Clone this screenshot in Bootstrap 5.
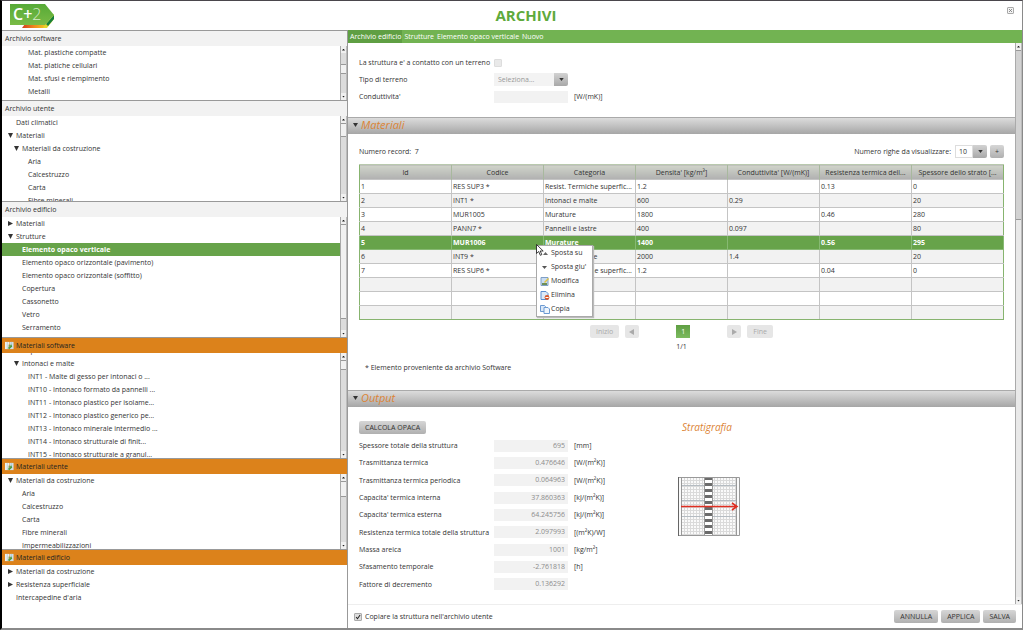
<!DOCTYPE html>
<html lang="it">
<head>
<meta charset="utf-8">
<meta name="viewport" content="width=device-width, initial-scale=1">
<title>Archivi</title>
<link href="https://cdn.jsdelivr.net/npm/bootstrap@5.3.0/dist/css/bootstrap.min.css" rel="stylesheet">
<style>
:root{--green:#67a34a;--bar:#72b352;--orange:#dc821b}
body{font:7px/13px "Open Sans","Noto Sans",sans-serif;color:#333;background:#fff}
.app{height:100vh;min-height:600px;border:solid #8a8a8a;border-width:1px 1px 2px 2px;border-top-color:#4a464c;border-left-color:#000}
.topbar{height:29px}
.topbar h1{font-size:15px;line-height:29px;font-weight:700;color:#5eaa3c}
.logo{left:8px;top:2px}
.closer{right:8px;top:6px;width:7px;height:7px;border:1px solid #aaa;border-radius:1px;background:#f4f4f4}
.closer svg,.btn-x svg,.arrow-box svg{display:block;margin:auto}
/* sidebar */
.side{width:346px;border-right:1px solid #999;display:grid;grid-template-rows:70fr 101fr 136fr 121fr 91fr 79fr}
.pane{border-top:1px solid #999;min-height:0}
.pane-head{height:15px;line-height:15px;background:#f2f2f2;padding-left:3px;font-size:7px;flex:none}
.pane-head svg{margin-right:2px}
.mat .pane-head{background:var(--orange);color:#222}
.tree a{display:block;color:#333;text-decoration:none;height:13px;line-height:13px;white-space:nowrap}
.tree .l1{padding-left:14px}.tree .l2{padding-left:20px}.tree .l3{padding-left:26px}
.tree .open::before,.tree .shut::before{content:"";display:inline-block;width:5px;height:5px;margin-left:-8px;margin-right:3px;background:#333;clip-path:polygon(0 0,100% 0,50% 100%)}
.tree .shut::before{clip-path:polygon(0 0,100% 50%,0 100%)}
.tree a.picked{background:var(--green);color:#fff;font-weight:700}
.scrolled{margin-top:-9px}
.sbar{width:7px;flex:none;background:#dcdcdc;border-left:1px solid #aaa;border-right:1px solid #bbb}
.sbar i{height:7px;flex:none;background:#f0f0f0;display:flex;align-items:center;justify-content:center}
.sbar i::before{content:"";width:3px;height:2px;background:#222;clip-path:polygon(50% 0,100% 100%,0 100%)}
.sbar i:last-child::before{clip-path:polygon(0 0,100% 0,50% 100%)}
.thumb{background:#f1f1f1;border:1px solid #999;border-width:1px 0;flex:none}
.sbar.main-bar{background:#e9e9e9}
.main-bar .thumb{background:#d2d2d2}
/* main */
.crumbs{height:13px;background:var(--bar);line-height:13px}
.crumbs a{color:#fff;text-decoration:none;padding:0 1px 0 2px}
.crumbs a.here{background:#5f9f43}
.frm{display:grid;grid-template-columns:135px 74px 1fr;grid-auto-rows:17px;align-items:center;column-gap:0}
.frm .unit{padding-left:6px}
.box{border:0;background:#f2f2f2;height:12px;width:100%;padding:0 3px;text-align:right;color:#8c8c8c;font-size:7px;line-height:12px;display:block}
.sel{display:flex;height:13px}
.sel select{appearance:none;flex:1;min-width:0;border:0;background:#f3f3f3;color:#999;padding:0 4px;font-size:7px;line-height:13px}
.sel .rows-num{background:#fff;color:#333;border:1px solid #ddd;padding:0 3px;line-height:11px}
.arrow-box{width:14px;display:flex;align-items:center;background:linear-gradient(#d2d2d2,#a8a8a8);border-radius:0 2px 2px 0;pointer-events:none}
.sect{height:17px;background:linear-gradient(#dcdcdc,#a6a6a6);border-top:1px solid #aaa}
.sect h2,.strat h2{font-size:11px;line-height:13px;font-weight:400;font-style:italic;margin:0;color:#dc8436}
.sect::before{content:"";width:5px;height:4px;background:#333;clip-path:polygon(0 0,100% 0,50% 100%);margin:5px 3px 0 5px}
.pad{padding-left:11px;padding-right:11px}
.btn-x{border:0;border-radius:2px;background:linear-gradient(#d6d6d6,#b0b0b0);color:#333;font-size:7px;line-height:13px;height:13px;padding:0 6px}
.btn-x:disabled{background:#e6e6e6;color:#aaa}
.btn-x.sq{width:14px;padding:0}
.btn-x.now{background:linear-gradient(#5f9f43,#7cba5f);color:#fff;border-radius:0}
.pager{gap:6px;margin-top:5px}
.grid7{table-layout:fixed;width:100%;border-collapse:collapse;border:1px solid #87b46f}
.grid7 th{height:15px;padding:0 2px;line-height:13px;font-weight:400;text-align:center;background:linear-gradient(#d0d4ca,#b0b0b0);border-left:1px solid #a8b89e;border-top:1px solid #b9c9ae}
.grid7 td{height:14px;line-height:12px;padding:0 1px;border:1px solid #c4c4c4}
.grid7 th,.grid7 .cut{overflow:hidden;white-space:nowrap;text-overflow:ellipsis}
.grid7 tbody tr:nth-child(even) td{background:#f2f2f2}
.grid7 tbody tr.picked td{background:var(--green);color:#fff;font-weight:700;border-color:#87b973}
.grid7 tr>:first-child{border-left-color:#87b46f}
.grid7 tr>:last-child{border-right-color:#87b46f}
.grid7 tbody tr:last-child td{border-bottom-color:#87b46f}
.ctx{left:-8px;top:9px;width:57px;background:#fff;border:1px solid #aaa;box-shadow:1px 1px 1px #bbb;z-index:3}
.ctx button{display:flex;align-items:center;gap:1px;height:14px;line-height:14px;width:100%;border:0;background:none;color:#333;font-size:7px;padding:0 3px;white-space:nowrap}
.pointer{left:-8px;top:8px;z-index:4}
.left{width:297px;flex:none}
.fields{grid-auto-rows:1fr}
.strat{width:106px;text-align:center}
.strat h2{font-size:10px;padding-right:4px}
.strat svg{margin-top:43px}
.foot{height:24px;border-top:1px solid #eee;padding:0 6px}
.foot input,.tick{appearance:none;width:8px;height:8px;margin:0;background:#e9e9e9;border:1px solid #ddd;border-radius:1px}
.foot input{border-color:#aaa}
.foot label{margin-left:3px}
.foot .btn-x+.btn-x{margin-left:3px}
.foot input:checked{background:#ddd url("data:image/svg+xml,%3Csvg xmlns='http://www.w3.org/2000/svg' viewBox='0 0 8 8'%3E%3Cpath d='M1.5 4 3.3 6.3 6.8 1.4' fill='none' stroke='%23222' stroke-width='1.4'/%3E%3C/svg%3E") center/100% no-repeat}
</style>
</head>
<body>
<svg class="d-none">
  <symbol id="leaf" viewBox="0 0 10 10"><path d="M0 1h5v8H0z" fill="#eef3ee"/><path d="M5.500 1H9.500v8h-4z" fill="#cfe0ea"/><path d="M2.500 1v8M7 1v3" stroke="#a9bccb" stroke-width=".7"/><path d="M3 8 7 3.500 8 6 5 9z" fill="#3f9a3c"/><path d="M4 4h2v3H4z" fill="#8a9a45"/></symbol>
  <symbol id="dn" viewBox="0 0 6 4"><path d="M0 0h6L3 4z" fill="#333"/></symbol>
</svg>
<div class="app d-flex flex-column overflow-hidden">
  <header class="topbar position-relative text-center flex-shrink-0">
    <svg class="logo position-absolute" width="46" height="26" viewBox="0 0 46 26" role="img" aria-label="C+2">
      <defs><linearGradient id="lg" x2="0" y2="1"><stop stop-color="#57aa37"/><stop offset="1" stop-color="#79bb45"/></linearGradient><linearGradient id="rg"><stop stop-color="#d63b1e"/><stop offset=".5" stop-color="#ef8b1d"/><stop offset="1" stop-color="#f1d024"/></linearGradient></defs>
      <path d="M12 25l3-4h22l-3 4z" fill="url(#rg)"/><path d="M33 25 44 11v5l-7 9z" fill="#e3d62c"/><path d="M36 21l8-9v4l-6 7z" fill="#17803a"/>
      <path d="M0 1h35l9 11-9 10H0z" fill="url(#lg)"/>
      <text x="3" y="17" font-size="16" font-weight="600" fill="#fff">C+<tspan font-weight="300" fill="#d6ebc9">2</tspan></text>
    </svg>
    <h1 class="m-0 ps-1 ms-4">ARCHIVI</h1>
    <button class="closer position-absolute p-0" aria-label="Chiudi"><svg width="5" height="5" viewBox="0 0 5 5"><path d="M1 1l3 3M4 1 1 4" stroke="#777" stroke-width=".8"/></svg></button>
  </header>
  <div class="d-flex flex-grow-1 overflow-hidden">
    <aside class="side flex-shrink-0">
      <section class="pane d-flex flex-column overflow-hidden">
        <div class="pane-head">Archivio software</div>
        <div class="d-flex flex-grow-1 overflow-hidden">
          <nav class="tree flex-grow-1 overflow-hidden"><a href="#" class="l3">Mat. plastiche compatte</a><a href="#" class="l3">Mat. platiche cellulari</a><a href="#" class="l3">Mat. sfusi e riempimento</a><a href="#" class="l3">Metalli</a></nav>
          <div class="sbar d-flex flex-column"><i></i><div class="flex-grow-1 d-flex flex-column"><div style="flex:3"></div><div class="thumb" style="height:24%"></div><div style="flex:5"></div></div><i></i></div>
        </div>
      </section>
      <section class="pane d-flex flex-column overflow-hidden">
        <div class="pane-head">Archivio utente</div>
        <div class="d-flex flex-grow-1 overflow-hidden">
          <nav class="tree flex-grow-1 overflow-hidden"><a href="#" class="l1">Dati climatici</a><a href="#" class="l1 open">Materiali</a><a href="#" class="l2 open">Materiali da costruzione</a><a href="#" class="l3">Aria</a><a href="#" class="l3">Calcestruzzo</a><a href="#" class="l3">Carta</a><a href="#" class="l3">Fibre minerali</a></nav>
          <div class="sbar d-flex flex-column"><i></i><div class="flex-grow-1"><div class="thumb" style="height:20%"></div></div><i></i></div>
        </div>
      </section>
      <section class="pane d-flex flex-column overflow-hidden">
        <div class="pane-head">Archivio edificio</div>
        <div class="d-flex flex-grow-1 overflow-hidden">
          <nav class="tree flex-grow-1 overflow-hidden"><a href="#" class="l1 shut">Materiali</a><a href="#" class="l1 open">Strutture</a><a href="#" class="l2 picked">Elemento opaco verticale</a><a href="#" class="l2">Elemento opaco orizzontale (pavimento)</a><a href="#" class="l2">Elemento opaco orizzontale (soffitto)</a><a href="#" class="l2">Copertura</a><a href="#" class="l2">Cassonetto</a><a href="#" class="l2">Vetro</a><a href="#" class="l2">Serramento</a></nav>
          <div class="sbar d-flex flex-column"><i></i><div class="flex-grow-1"><div class="thumb" style="height:90%"></div></div><i></i></div>
        </div>
      </section>
      <section class="pane mat d-flex flex-column overflow-hidden">
        <div class="pane-head d-flex align-items-center"><svg width="9" height="9"><use href="#leaf"/></svg>Materiali software</div>
        <div class="d-flex flex-grow-1 overflow-hidden">
          <nav class="tree flex-grow-1 overflow-hidden"><div class="scrolled"><a href="#" class="l2">Impermeabilizzazioni</a><a href="#" class="l2 open">Intonaci e malte</a><a href="#" class="l3">INT1 - Malte di gesso per intonaci o ...</a><a href="#" class="l3">INT10 - Intonaco formato da pannelli ...</a><a href="#" class="l3">INT11 - Intonaco plastico per isolame...</a><a href="#" class="l3">INT12 - Intonaco plastico generico pe...</a><a href="#" class="l3">INT13 - Intonaco minerale intermedio ...</a><a href="#" class="l3">INT14 - Intonaco strutturale di finit...</a><a href="#" class="l3">INT15 - Intonaco strutturale a granul...</a></div></nav>
          <div class="sbar d-flex flex-column"><i></i><div class="flex-grow-1"><div class="thumb" style="height:11%"></div></div><i></i></div>
        </div>
      </section>
      <section class="pane mat d-flex flex-column overflow-hidden">
        <div class="pane-head d-flex align-items-center"><svg width="9" height="9"><use href="#leaf"/></svg>Materiali utente</div>
        <div class="d-flex flex-grow-1 overflow-hidden">
          <nav class="tree flex-grow-1 overflow-hidden"><a href="#" class="l1 open">Materiali da costruzione</a><a href="#" class="l2">Aria</a><a href="#" class="l2">Calcestruzzo</a><a href="#" class="l2">Carta</a><a href="#" class="l2">Fibre minerali</a><a href="#" class="l2">Impermeabilizzazioni</a></nav>
          <div class="sbar d-flex flex-column"><i></i><div class="flex-grow-1"><div class="thumb" style="height:26%"></div></div><i></i></div>
        </div>
      </section>
      <section class="pane mat d-flex flex-column overflow-hidden">
        <div class="pane-head d-flex align-items-center"><svg width="9" height="9"><use href="#leaf"/></svg>Materiali edificio</div>
        <nav class="tree"><a href="#" class="l1 shut">Materiali da costruzione</a><a href="#" class="l1 shut">Resistenza superficiale</a><a href="#" class="l1">Intercapedine d'aria</a></nav>
      </section>
    </aside>
    <main class="d-flex flex-column flex-grow-1 overflow-hidden">
      <nav class="crumbs d-flex flex-shrink-0"><a href="#" class="here">Archivio edificio</a><a href="#">Strutture</a><a href="#">Elemento opaco verticale</a><a href="#">Nuovo</a></nav>
      <div class="d-flex flex-grow-1 overflow-hidden">
        <div class="flex-grow-1 d-flex flex-column overflow-hidden">
          <div class="frm pad" style="padding-top:11px;padding-bottom:12px">
            <label for="terr">La struttura e' a contatto con un terreno</label><input type="checkbox" class="tick" id="terr" disabled><span></span>
            <label for="tipo">Tipo di terreno</label><div class="sel"><select id="tipo" disabled><option>Seleziona...</option></select><span class="arrow-box"><svg width="5" height="3"><use href="#dn"/></svg></span></div><span></span>
            <label for="cond">Conduttivita'</label><input class="box" id="cond" disabled><span class="unit">[W/(mK)]</span>
          </div>
          <div class="sect d-flex align-items-start flex-shrink-0"><h2>Materiali</h2></div>
          <div class="pad" style="padding-top:11px">
            <div class="d-flex align-items-center" style="margin-bottom:6px">
              <span>Numero record:&nbsp; 7</span>
              <label class="ms-auto me-1" for="righe">Numero righe da visualizzare:</label>
              <div class="sel" style="width:32px;margin-right:3px"><select id="righe" class="rows-num"><option>10</option></select><span class="arrow-box"><svg width="5" height="3"><use href="#dn"/></svg></span></div>
              <button class="btn-x sq">+</button>
            </div>
            <table class="grid7">
              <thead><tr><th>Id</th><th>Codice</th><th>Categoria</th><th>Densita' [kg/m³]</th><th>Conduttivita' [W/(mK)]</th><th>Resistenza termica dell...</th><th>Spessore dello strato [...</th></tr></thead>
              <tbody>
                <tr><td>1</td><td>RES SUP3 *</td><td class="cut">Resist. Termiche superfic...</td><td>1.2</td><td></td><td>0.13</td><td>0</td></tr>
                <tr><td>2</td><td>INT1 *</td><td>Intonaci e malte</td><td>600</td><td>0.29</td><td></td><td>20</td></tr>
                <tr><td>3</td><td>MUR1005</td><td>Murature</td><td>1800</td><td></td><td>0.46</td><td>280</td></tr>
                <tr><td>4</td><td>PANN7 *</td><td>Pannelli e lastre</td><td>400</td><td>0.097</td><td></td><td>80</td></tr>
                <tr class="picked"><td>5</td><td>MUR1006</td><td class="position-relative">Murature
                  <div class="ctx position-absolute fw-normal">
                    <button><svg width="10" height="9" viewBox="0 0 10 9"><path d="M3 6h5L5.500 3z" fill="#666"/></svg>Sposta su</button>
                    <button><svg width="10" height="9" viewBox="0 0 10 9"><path d="M2 3h5L4.500 6z" fill="#555"/></svg>Sposta giu'</button>
                    <button><svg width="10" height="9" viewBox="0 0 10 9"><path d="M1 .5h7v8H1z" fill="#c9dcf2" stroke="#7f9fc4"/><path d="M2 6h5v2H2z" fill="#6c8e58"/><path d="M4 5 8 1l1 1-4 4z" fill="#e3c53e"/></svg>Modifica</button>
                    <button><svg width="10" height="9" viewBox="0 0 10 9"><path d="M1 .5h5l2 2v6H1z" fill="#dce9f8" stroke="#5b8fd0"/><circle cx="7" cy="6.500" r="2.400" fill="#d9582b"/><path d="M5.500 6.500h3" stroke="#fff"/></svg>Elimina</button>
                    <button><svg width="10" height="9" viewBox="0 0 10 9"><path d="M.5.5h4l1 1v5h-5z" fill="#dce9f8" stroke="#6c9ad2"/><path d="M4 2.500h4l1.500 1.500v4.500H4z" fill="#eef5fc" stroke="#6c9ad2"/></svg>Copia</button>
                  </div>
                  <svg class="pointer position-absolute" width="9" height="12" viewBox="0 0 9 12"><path d="M.5.5v9l2.200-2 1.600 3.800 1.500-.7-1.600-3.600h3z" fill="#fff" stroke="#111" stroke-width=".8"/></svg>
                </td><td>1400</td><td></td><td>0.56</td><td>295</td></tr>
                <tr><td>6</td><td>INT9 *</td><td>Intonaci e malte</td><td>2000</td><td>1.4</td><td></td><td>20</td></tr>
                <tr><td>7</td><td>RES SUP6 *</td><td class="cut">Resist. Termiche superfic...</td><td>1.2</td><td></td><td>0.04</td><td>0</td></tr>
                <tr><td></td><td></td><td></td><td></td><td></td><td></td><td></td></tr>
                <tr><td></td><td></td><td></td><td></td><td></td><td></td><td></td></tr>
                <tr><td></td><td></td><td></td><td></td><td></td><td></td><td></td></tr>
              </tbody>
            </table>
            <div class="pager d-flex justify-content-center">
              <button class="btn-x" disabled>Inizio</button><button class="btn-x sq" disabled aria-label="Indietro"><svg width="6" height="6" viewBox="0 0 6 6"><path d="M5 0v6L0 3z" fill="#aaa"/></svg></button>
              <button class="btn-x sq now" style="margin:0 31px">1</button>
              <button class="btn-x sq" disabled aria-label="Avanti"><svg width="6" height="6" viewBox="0 0 6 6"><path d="M1 0v6l5-3z" fill="#aaa"/></svg></button><button class="btn-x" disabled>Fine</button>
            </div>
            <div class="text-center" style="margin-top:2px">1/1</div>
            <p style="margin:8px 0 16px 6px">* Elemento proveniente da archivio Software</p>
          </div>
          <div class="sect d-flex align-items-start flex-shrink-0"><h2>Output</h2></div>
          <div class="pad d-flex flex-grow-1" style="padding-top:14px;padding-bottom:11px">
            <div class="left d-flex flex-column">
              <div style="margin-bottom:3px;height:13px" class="d-flex"><button class="btn-x">CALCOLA OPACA</button></div>
              <div class="frm fields flex-grow-1">
                <label for="o1">Spessore totale della struttura</label><input class="box" id="o1" value="695" disabled><span class="unit">[mm]</span>
                <label for="o2">Trasmittanza termica</label><input class="box" id="o2" value="0.476646" disabled><span class="unit">[W/(m²K)]</span>
                <label for="o3">Trasmittanza termica periodica</label><input class="box" id="o3" value="0.064963" disabled><span class="unit">[W/(m²K)]</span>
                <label for="o4">Capacita' termica interna</label><input class="box" id="o4" value="37.860363" disabled><span class="unit">[kJ/(m²K)]</span>
                <label for="o5">Capacita' termica esterna</label><input class="box" id="o5" value="64.245756" disabled><span class="unit">[kJ/(m²K)]</span>
                <label for="o6">Resistenza termica totale della struttura</label><input class="box" id="o6" value="2.097993" disabled><span class="unit">[(m²K)/W]</span>
                <label for="o7">Massa areica</label><input class="box" id="o7" value="1001" disabled><span class="unit">[kg/m²]</span>
                <label for="o8">Sfasamento temporale</label><input class="box" id="o8" value="-2.761818" disabled><span class="unit">[h]</span>
                <label for="o9">Fattore di decremento</label><input class="box" id="o9" value="0.136292" disabled><span class="unit"></span>
              </div>
            </div>
            <div class="strat">
              <h2>Stratigrafia</h2>
              <svg width="62" height="59" viewBox="0 0 62 59" role="img" aria-label="Stratigrafia della parete">
                <defs><pattern id="hatch" width="3" height="3" patternUnits="userSpaceOnUse"><path d="M0 .5h3M.5 0v3" stroke="#dadada"/></pattern><pattern id="brick" width="8" height="6" patternUnits="userSpaceOnUse"><path d="M0 0h8v3H0z" fill="#6b6b6b"/></pattern></defs>
                <path d="M0 0h62v59H0z" fill="#fafafa"/><path d="M3 0h56v59H3z" fill="url(#hatch)"/><path d="M3 8.500h56M3 23.500h56M3 39.500h56" stroke="#b5bcc2"/>
                <path d="M26 0h9v59h-9z" fill="#fff"/><path d="M27 0h7v59h-7z" fill="url(#brick)"/>
                <path d="M.5.5h61v58H.5z" fill="none" stroke="#999"/><path d="M3.500 0v59M58.500 0v59M26.500 0v59M34.500 0v59" stroke="#999"/><path d="M.5 0v59" stroke="#666"/>
                <path d="M3 29.500h56M54 26l5 3.500-5 3.500" fill="none" stroke="#df2f22" stroke-width="1.600"/>
              </svg>
            </div>
          </div>
        </div>
        <div class="sbar main-bar d-flex flex-column"><i></i><div class="flex-grow-1"><div class="thumb" style="height:31%"></div></div><i></i></div>
      </div>
      <footer class="foot d-flex align-items-center flex-shrink-0">
        <input type="checkbox" id="copia" checked><label for="copia">Copiare la struttura nell'archivio utente</label>
        <button class="btn-x ms-auto">ANNULLA</button><button class="btn-x">APPLICA</button><button class="btn-x">SALVA</button>
      </footer>
    </main>
  </div>
</div>
<script src="https://cdn.jsdelivr.net/npm/bootstrap@5.3.0/dist/js/bootstrap.bundle.min.js"></script>
</body>
</html>
